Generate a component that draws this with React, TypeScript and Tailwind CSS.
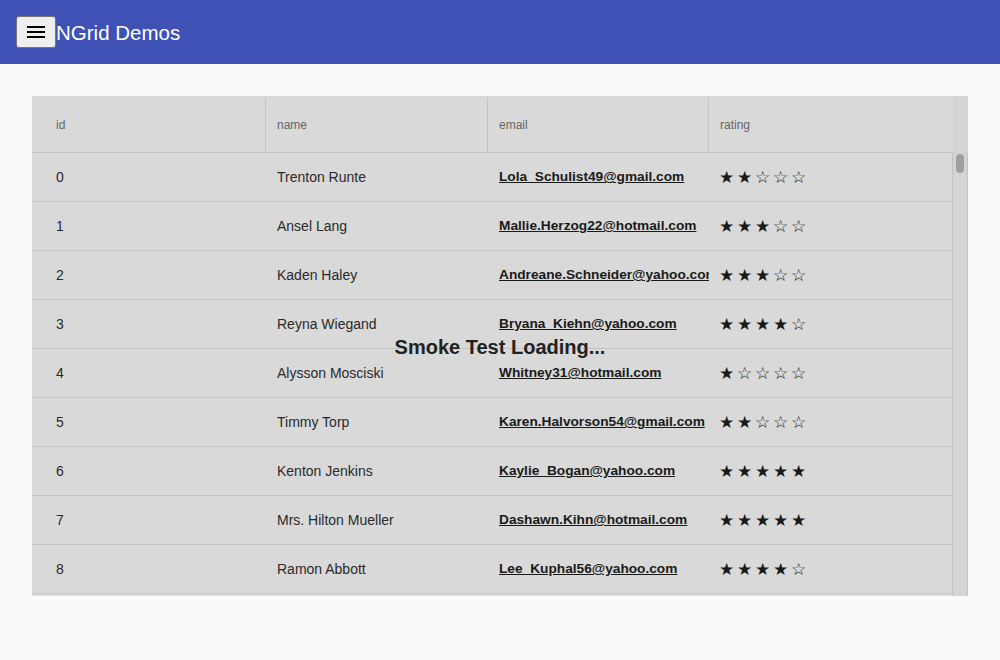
import React from 'react';

const rows = [
  { id: 0, name: 'Trenton Runte', email: 'Lola_Schulist49@gmail.com', rating: 2 },
  { id: 1, name: 'Ansel Lang', email: 'Mallie.Herzog22@hotmail.com', rating: 3 },
  { id: 2, name: 'Kaden Haley', email: 'Andreane.Schneider@yahoo.com', rating: 3 },
  { id: 3, name: 'Reyna Wiegand', email: 'Bryana_Kiehn@yahoo.com', rating: 4 },
  { id: 4, name: 'Alysson Mosciski', email: 'Whitney31@hotmail.com', rating: 1 },
  { id: 5, name: 'Timmy Torp', email: 'Karen.Halvorson54@gmail.com', rating: 2 },
  { id: 6, name: 'Kenton Jenkins', email: 'Kaylie_Bogan@yahoo.com', rating: 5 },
  { id: 7, name: 'Mrs. Hilton Mueller', email: 'Dashawn.Kihn@hotmail.com', rating: 5 },
  { id: 8, name: 'Ramon Abbott', email: 'Lee_Kuphal56@yahoo.com', rating: 4 },
];

function Stars({ value }: { value: number }) {
  return (
    <div className="flex text-[17px] leading-none text-[#1a1a1a] -ml-[2px]">
      {[0, 1, 2, 3, 4].map((i) => (
        <span key={i} className="inline-block w-[18px]">
          {i < value ? '★' : '☆'}
        </span>
      ))}
    </div>
  );
}

export default function App() {
  return (
    <div className="min-h-[660px] bg-[#fafafa] font-['Liberation_Sans',Arial,sans-serif]">
      {/* Toolbar */}
      <header className="h-16 bg-[#3f51b5] flex items-center pl-4">
        <button className="w-10 h-8 bg-[#efefef] border border-[#767676] rounded-[3px] flex items-center justify-center">
          <svg width="20" height="14" viewBox="0 0 20 14">
            <rect x="1" y="1" width="18" height="2" fill="#000" />
            <rect x="1" y="6" width="18" height="2" fill="#000" />
            <rect x="1" y="11" width="18" height="2" fill="#000" />
          </svg>
        </button>
        <span className="text-white text-[20.5px] pt-[2px]">NGrid Demos</span>
      </header>

      {/* Grid */}
      <div className="px-8 pt-8">
        <div className="relative h-[500px] flex bg-[#d9d9d9] overflow-hidden">
          <div className="flex-1 flex flex-col">
            <div className="h-[57px] flex border-b border-[#c4c4c4] text-[12px] text-[#666] pt-[2px]">
              <div className="w-[234px] pl-6 flex items-center border-r border-[#c4c4c4]">id</div>
              <div className="w-[222px] pl-[11px] flex items-center border-r border-[#c4c4c4]">name</div>
              <div className="w-[221px] pl-[11px] flex items-center border-r border-[#c4c4c4]">email</div>
              <div className="flex-1 pl-[11px] flex items-center">rating</div>
            </div>
            <div className="flex-1 border-r border-[#c4c4c4]">
              {rows.map((r) => (
                <div key={r.id} className="h-[49px] flex border-b border-[#c4c4c4] text-[14px] text-[#2a2a2a]">
                  <div className="w-[234px] pl-6 flex items-center">{r.id}</div>
                  <div className="w-[222px] pl-[11px] flex items-center">{r.name}</div>
                  <div className="w-[221px] pl-[11px] flex items-center overflow-hidden whitespace-nowrap pt-[1px]">
                    <a className="font-bold underline text-[13.7px] text-[#1a1a1a]">{r.email}</a>
                  </div>
                  <div className="flex-1 pl-3 flex items-center">
                    <Stars value={r.rating} />
                  </div>
                </div>
              ))}
            </div>
          </div>
          {/* Scrollbar */}
          <div className="w-[15px] bg-[#d4d4d4] flex flex-col">
            <div className="h-[57px]" />
            <div className="flex-1 border-r border-[#c4c4c4] pt-[1px] pl-[3px]">
              <div className="w-[8px] h-[19px] rounded-[4px] bg-[#a0a0a0]" />
            </div>
          </div>

          <div className="absolute inset-0 flex items-center justify-center pointer-events-none pt-[2px]">
            <span className="text-[20px] font-bold text-[#222]">Smoke Test Loading...</span>
          </div>
        </div>
      </div>
    </div>
  );
}
